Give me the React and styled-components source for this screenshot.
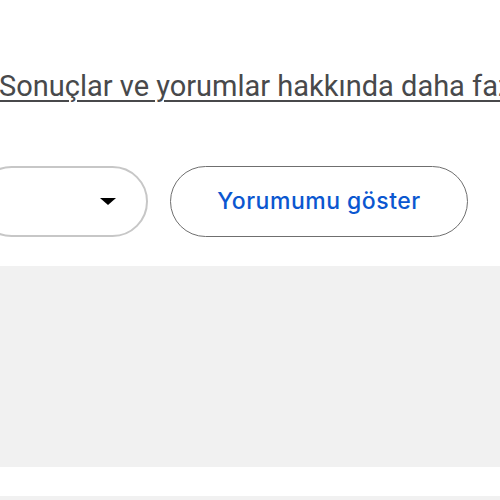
import React from 'react'
import styled, { createGlobalStyle } from 'styled-components'

const GlobalStyle = createGlobalStyle`
  html, body {
    margin: 0;
    padding: 0;
    background: #ffffff;
    overflow: hidden;
  }
  body {
    font-family: Roboto, "Open Sans", Arial, sans-serif;
  }
`

const Page = styled.div`
  width: 500px;
  height: 500px;
  overflow: hidden;
  display: flex;
  flex-direction: column;
`

const MoreLink = styled.a`
  display: block;
  margin: 64px 0 0 -1px;
  font-size: 29px;
  line-height: 44px;
  color: #48494b;
  text-decoration: underline;
  text-decoration-thickness: 2px;
  text-underline-offset: 4px;
  white-space: nowrap;
`

const Controls = styled.div`
  display: flex;
  align-items: center;
  gap: 22px;
  margin: 58px 0 0 -24px;
`

const Select = styled.div`
  box-sizing: border-box;
  width: 172px;
  height: 71px;
  border: 2px solid #c7c7c7;
  border-radius: 36px;
  display: flex;
  align-items: center;
  justify-content: flex-end;
  padding-right: 30px;
`

const Arrow = styled.span`
  width: 0;
  height: 0;
  border-left: 8px solid transparent;
  border-right: 8px solid transparent;
  border-top: 7px solid #000000;
`

const ShowButton = styled.button`
  box-sizing: border-box;
  width: 298px;
  height: 71px;
  padding: 0 0 2px;
  border: 1.5px solid #6f6f6f;
  border-radius: 36px;
  background: #ffffff;
  color: #0b57d0;
  font-family: Inter, Roboto, Arial, sans-serif;
  font-size: 23px;
  font-weight: 500;
  letter-spacing: 0.5px;
  cursor: pointer;
`

const Panel = styled.div`
  height: ${p => p.height}px;
  margin-top: ${p => p.gap}px;
  background: #f1f1f1;
  flex-shrink: 0;
`

export default function App() {
  return (
    <>
      <GlobalStyle />
      <Page>
        <MoreLink href="#">Sonuçlar ve yorumlar hakkında daha fazla bilgi</MoreLink>
        <Controls>
          <Select>
            <Arrow />
          </Select>
          <ShowButton>Yorumumu göster</ShowButton>
        </Controls>
        <Panel gap={29} height={201} />
        <Panel gap={29} height={10} />
      </Page>
    </>
  )
}
